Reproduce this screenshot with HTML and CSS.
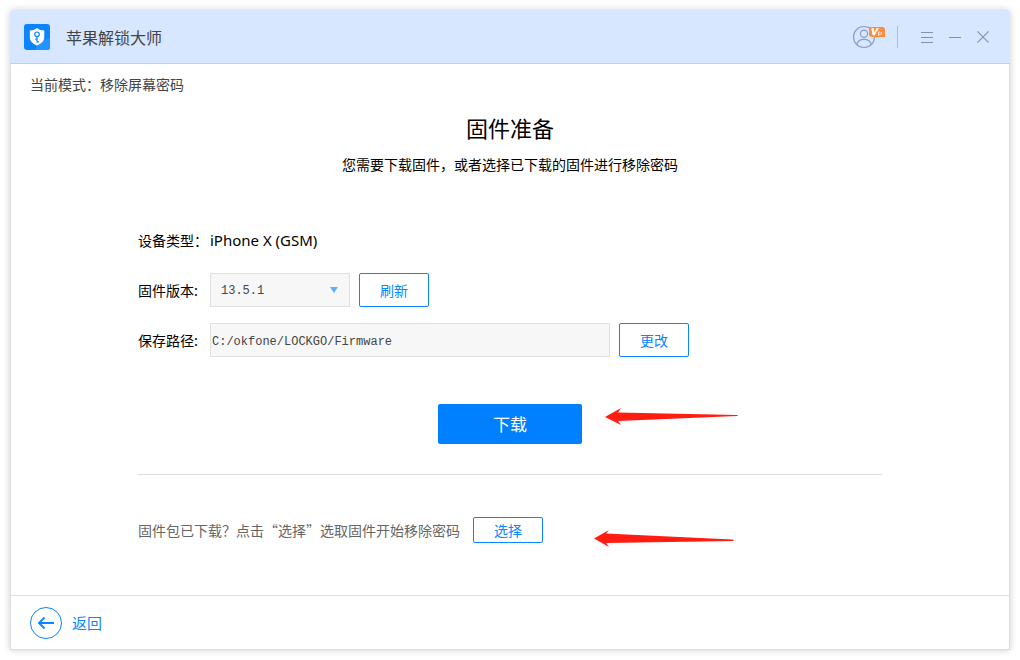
FILE: index.html
```html
<!DOCTYPE html>
<html lang="zh-CN">
<head>
<meta charset="utf-8">
<meta name="viewport" content="width=device-width, initial-scale=1">
<title>苹果解锁大师</title>
<link rel="stylesheet" href="styles.css">
</head>
<body>
<div class="window">
  <header class="titlebar">
    <svg class="logo" viewBox="0 0 26 26" aria-hidden="true">
      <rect width="26" height="26" rx="3" fill="#0a84ff"/>
      <path d="M12 26c0-3 1-4.500 3.500-5 .5-3 3-5 5.500-5 1-1.500 3-2 5-1.500V23a3 3 0 0 1-3 3z" fill="#2493ff"/>
      <path d="M13 4c2 1.700 4.500 2.500 7.300 2.500v6.500c0 4-2.800 6.700-7.300 8.500-4.500-1.800-7.200-4.500-7.200-8.500V6.500C8.500 6.500 11 5.700 13 4z" fill="#fff"/>
      <circle cx="13" cy="10.300" r="2.300" fill="none" stroke="#0a84ff" stroke-width="1.200"/>
      <path d="M13 12.600v5.900M13 15.100h-1.800M13 17.900h1.900" fill="none" stroke="#0a84ff" stroke-width="1.200"/>
    </svg>
    <span class="app-name">苹果解锁大师</span>
    <div class="tools">
      <button class="tool account" type="button" aria-label="账户">
        <svg width="34" height="24" viewBox="0 0 34 24">
          <g fill="none" stroke="#8b9bc8" stroke-width="1.200">
            <circle cx="12" cy="12" r="10.500"/>
            <circle cx="12" cy="8.700" r="3.600"/>
            <path d="M4.800 19.700c.6-3.400 3.600-5.400 7.200-5.400s6.600 2 7.200 5.400"/>
          </g>
          <path d="M17 2h13q3 0 3 3v7H20q-3 0-3-3z" fill="#ff8b3d"/>
          <path d="M19.300 3.300h2.500l.5 4L24.500 3.300h2.500l-4.400 7h-2z" fill="#fff"/>
          <path d="M26.500 11V7h1.800q1.400 0 1.400 1.200t-1.400 1.200h-1.800" fill="none" stroke="#ffe3d0"/>
        </svg>
      </button>
      <span class="separator"></span>
      <button class="tool" type="button" aria-label="菜单">
        <svg width="12" height="14" viewBox="0 0 12 14"><path d="M0 2.500h12M0 7.500h12M0 12.500h12" stroke="#8191be"/></svg>
      </button>
      <button class="tool" type="button" aria-label="最小化">
        <svg width="12" height="14" viewBox="0 0 12 14"><path d="M0 7.500h12" stroke="#8191be"/></svg>
      </button>
      <button class="tool" type="button" aria-label="关闭">
        <svg width="12" height="14" viewBox="0 0 12 14"><path d="M.4 1.400l11.200 11.200M11.600 1.400L.4 12.600" stroke="#8191be" stroke-width="1.200"/></svg>
      </button>
    </div>
  </header>

  <main class="content">
    <p class="mode">当前模式：移除屏幕密码</p>
    <h1 class="heading">固件准备</h1>
    <p class="intro">您需要下载固件，或者选择已下载的固件进行移除密码</p>

    <form class="form">
      <div class="row">
        <span class="label">设备类型：</span>
        <span class="device">iPhone X (GSM)</span>
      </div>
      <div class="row">
        <label class="label" for="version">固件版本:</label>
        <div class="picker">
          <select class="field version" id="version"><option>13.5.1</option></select>
          <svg class="caret" width="8" height="6" viewBox="0 0 8 6" aria-hidden="true"><path d="M0 0h8L4 6z" fill="#5eb0ff"/></svg>
        </div>
        <button class="button" type="button">刷新</button>
      </div>
      <div class="row">
        <label class="label" for="path">保存路径:</label>
        <input class="field path" id="path" type="text" value="C:/okfone/LOCKGO/Firmware">
        <button class="button" type="button">更改</button>
      </div>
      <div class="download-row">
        <div class="download-anchor">
          <button class="download" type="button">下载</button>
          <svg class="arrow arrow-download" width="134" height="20" viewBox="0 0 134 20" aria-hidden="true"><path d="M0 10L16 1l-3 4.500 119 2.500q2 .5 0 1L13 14l3 4z" fill="#ff1d12"/></svg>
        </div>
      </div>
      <hr class="rule">
      <div class="choose-row">
        <span class="hint">固件包已下载？点击“选择”选取固件开始移除密码</span>
        <div class="choose-anchor">
          <button class="button small" type="button">选择</button>
          <svg class="arrow arrow-choose" width="142" height="20" viewBox="0 0 142 20" aria-hidden="true"><path d="M0 9.500L15 1l-3 3.500 126 6q3 .5 1 1.500L12 14l3 4z" fill="#ff1d12"/></svg>
        </div>
      </div>
    </form>
  </main>

  <footer class="footer">
    <button class="back" type="button">
      <svg width="32" height="32" viewBox="0 0 32 32" fill="none" stroke="#0a84ff" aria-hidden="true">
        <circle cx="16" cy="16" r="15.500"/>
        <path d="M24 16H9M14.500 10.500L9 16l5.500 5.500" stroke-width="1.800"/>
      </svg>
      <span>返回</span>
    </button>
  </footer>
</div>
</body>
</html>
```
FILE: styles.css
```css
* {
  box-sizing: border-box;
}

body {
  margin: 0;
  padding: 10px;
  background: #fff;
  color: #000;
  font: 14px/20px "Noto Sans CJK SC", "Noto Sans", sans-serif;
}

button {
  font: inherit;
  cursor: pointer;
}

.window {
  display: flex;
  flex-direction: column;
  min-height: calc(100vh - 20px);
  border-radius: 3px 3px 0 0;
  background: #fff;
  box-shadow: 0 0 7px rgba(0, 0, 0, 0.2);
}

.titlebar {
  display: flex;
  align-items: center;
  height: 54px;
  padding: 0 21px 0 14px;
  border-bottom: 1px solid #c4cfe2;
  border-radius: 3px 3px 0 0;
  background: #d7e7ff;
}

.logo {
  width: 26px;
  height: 26px;
}

.app-name {
  margin-left: 16px;
  color: #444;
  font-size: 16px;
}

.tools {
  display: flex;
  align-items: center;
  gap: 16px;
  margin-left: auto;
}

.tool {
  display: flex;
  padding: 0;
  border: 0;
  background: none;
}

.account {
  margin-right: -5px;
}

.separator {
  width: 1px;
  height: 22px;
  margin-right: 7px;
  background: #a9bbdf;
}

.content {
  flex: 1;
  padding: 10px 127px 0;
  border: solid #ddd;
  border-width: 0 1px;
}

.mode {
  margin: 0 0 18px -108px;
  color: #444;
}

.heading {
  margin: 0 0 12px;
  font-size: 22px;
  font-weight: 400;
  line-height: 30px;
  text-align: center;
}

.intro {
  margin: 0 0 49px;
  text-align: center;
}

.row {
  display: flex;
  align-items: center;
  min-height: 34px;
  margin-bottom: 16px;
}

.label {
  flex: none;
  width: 72px;
}

.device {
  font-family: "Noto Sans", sans-serif;
  font-size: 15px;
}

.field {
  height: 34px;
  border: 1px solid #e0e0e0;
  border-radius: 0;
  background: #f7f7f7;
  color: #444;
  font: 12px/20px "Liberation Mono", monospace;
}

.picker {
  position: relative;
  width: 140px;
}

.version {
  width: 100%;
  padding: 2px 24px 0 10px;
  appearance: none;
}

.caret {
  position: absolute;
  top: 14px;
  right: 12px;
  pointer-events: none;
}

.path {
  flex: 0 1 400px;
  min-width: 0;
  padding: 3px 1px 0;
}

.button {
  width: 70px;
  height: 34px;
  margin-left: 9px;
  padding: 0;
  border: 1px solid #0a84ff;
  border-radius: 2px;
  background: #fff;
  color: #0a84ff;
}

.small {
  height: 26px;
  margin-left: 13px;
  line-height: 24px;
}

.download-row {
  display: flex;
  justify-content: center;
  margin-top: 47px;
}

.download-anchor,
.choose-anchor {
  display: flex;
  position: relative;
}

.download {
  width: 144px;
  height: 40px;
  padding: 0;
  border: 0;
  border-radius: 2px;
  background: #0080ff;
  color: #fff;
  font-size: 17px;
}

.arrow {
  position: absolute;
  pointer-events: none;
}

.arrow-download {
  top: 3px;
  left: 167px;
}

.arrow-choose {
  top: 12px;
  left: 134px;
}

.rule {
  margin: 30px 0 42px;
  border: 0;
  border-top: 1px solid #ddd;
}

.choose-row {
  display: flex;
  align-items: center;
}

.hint {
  color: #666;
}

.footer {
  display: flex;
  align-items: center;
  height: 55px;
  padding: 0 19px;
  border: 1px solid #ddd;
}

.back {
  display: flex;
  align-items: center;
  gap: 10px;
  padding: 0;
  border: 0;
  background: none;
  color: #0a84ff;
  font-size: 15px;
}
```
